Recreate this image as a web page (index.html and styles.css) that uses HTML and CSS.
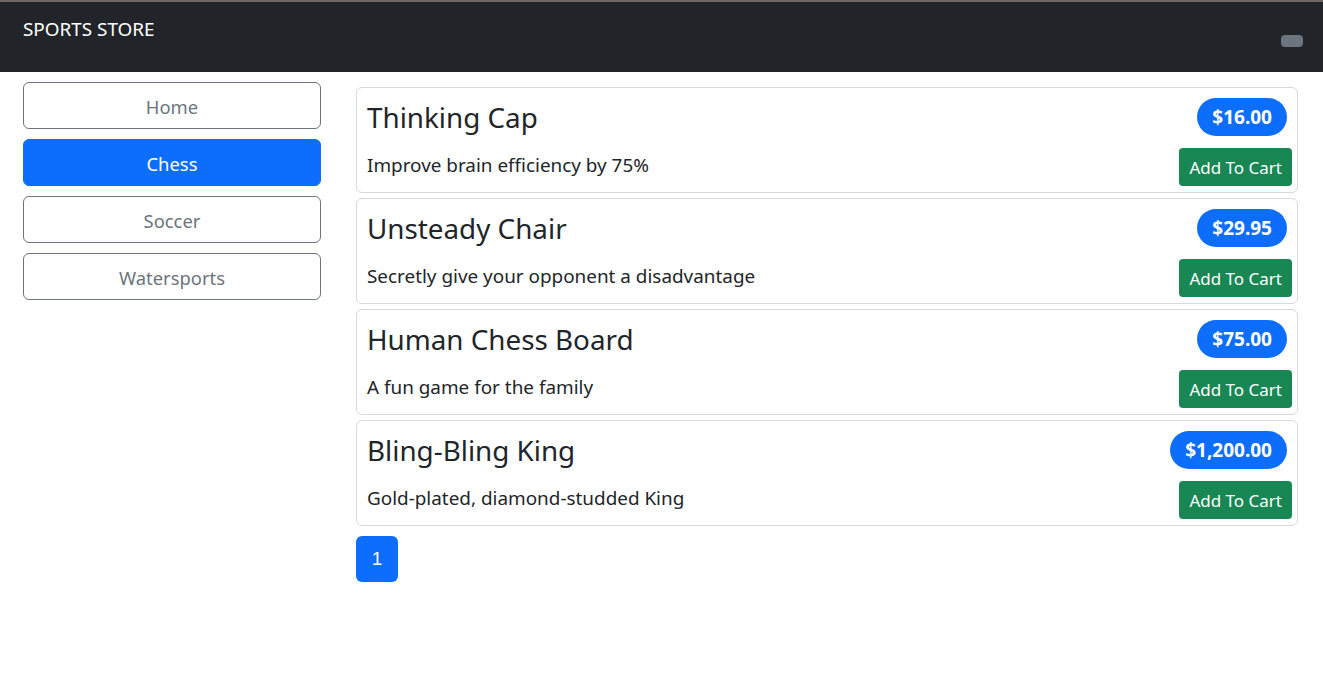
FILE: index.html
```html
<!DOCTYPE html>
<html lang="en">
<head>
<meta charset="utf-8">
<title>Sports Store</title>
<link rel="stylesheet" href="styles.css">
</head>
<body>
<header class="navbar">
  <span class="brand">SPORTS STORE</span>
  <button class="cart-btn" aria-label="cart"></button>
</header>
<div class="layout">
  <nav class="sidebar">
    <button class="cat">Home</button>
    <button class="cat active">Chess</button>
    <button class="cat">Soccer</button>
    <button class="cat">Watersports</button>
  </nav>
  <main class="products">
    <div class="card">
      <div class="row">
        <h3 class="title">Thinking Cap</h3>
        <span class="price">$16.00</span>
      </div>
      <div class="row row2">
        <p class="desc">Improve brain efficiency by 75%</p>
        <button class="add">Add To Cart</button>
      </div>
    </div>
    <div class="card">
      <div class="row">
        <h3 class="title">Unsteady Chair</h3>
        <span class="price">$29.95</span>
      </div>
      <div class="row row2">
        <p class="desc">Secretly give your opponent a disadvantage</p>
        <button class="add">Add To Cart</button>
      </div>
    </div>
    <div class="card">
      <div class="row">
        <h3 class="title">Human Chess Board</h3>
        <span class="price">$75.00</span>
      </div>
      <div class="row row2">
        <p class="desc">A fun game for the family</p>
        <button class="add">Add To Cart</button>
      </div>
    </div>
    <div class="card">
      <div class="row">
        <h3 class="title">Bling-Bling King</h3>
        <span class="price">$1,200.00</span>
      </div>
      <div class="row row2">
        <p class="desc">Gold-plated, diamond-studded King</p>
        <button class="add">Add To Cart</button>
      </div>
    </div>
    <div class="pager">
      <button class="page active">1</button>
    </div>
  </main>
</div>
</body>
</html>
```
FILE: styles.css
```css
* { box-sizing: border-box; }
html, body { margin: 0; padding: 0; }
body {
  font-family: "Noto Sans", "Open Sans", sans-serif;
  color: #212529;
  background: #fff;
}
button { font-family: inherit; }

.navbar {
  height: 72px;
  background: #212529;
  border-top: 2px solid #6b6661;
  display: flex;
  justify-content: space-between;
  align-items: flex-start;
  padding: 0 20px 0 23px;
}
.brand {
  color: #fff;
  font-size: 18.9px;
  line-height: 24px;
  margin-top: 15px;
}
.cart-btn {
  width: 22px;
  height: 12px;
  margin-top: 33px;
  background: #6c757d;
  border: none;
  border-radius: 4px;
  padding: 0;
}

.layout {
  display: grid;
  grid-template-columns: 298px 942px;
  column-gap: 35px;
  padding: 0 25px 0 23px;
}
.sidebar {
  display: flex;
  flex-direction: column;
  gap: 10px;
  padding-top: 10px;
}
.cat {
  height: 47px;
  background: #fff;
  border: 1px solid #6c757d;
  border-radius: 6px;
  color: #6c757d;
  font-size: 18.4px;
  padding: 2px 0 0;
}
.cat.active {
  background: #0d6efd;
  border-color: #0d6efd;
  color: #fff;
}

.products {
  padding-top: 15px;
  display: flex;
  flex-direction: column;
  gap: 5px;
}
.card {
  height: 106px;
  border: 1px solid #d9d9d9;
  border-radius: 6px;
  padding: 10px 5px 6px 10px;
}
.row {
  display: flex;
  align-items: center;
  justify-content: space-between;
  height: 38px;
}
.row2 { margin-top: 12px; }
.title {
  margin: 0;
  font-size: 27.8px;
  font-weight: 400;
  line-height: 32px;
}
.price {
  background: #0d6efd;
  color: #fff;
  font-weight: 700;
  font-size: 19px;
  height: 38px;
  line-height: 38px;
  padding: 0 15px;
  border-radius: 19px;
  margin-right: 5px;
}
.desc {
  margin: 0;
  font-size: 18.9px;
  line-height: 24px;
  position: relative;
  top: -2px;
}
.add {
  height: 38px;
  background: #198754;
  color: #fff;
  border: none;
  border-radius: 4px;
  font-size: 17px;
  padding: 0 10px;
}
.pager {
  margin-top: 5px;
  display: flex;
}
.page {
  width: 42px;
  height: 46px;
  border: none;
  border-radius: 6px;
  background: #0d6efd;
  color: #fff;
  font-family: "Liberation Sans", Arial, sans-serif;
  font-size: 19px;
  padding: 0;
}
```
